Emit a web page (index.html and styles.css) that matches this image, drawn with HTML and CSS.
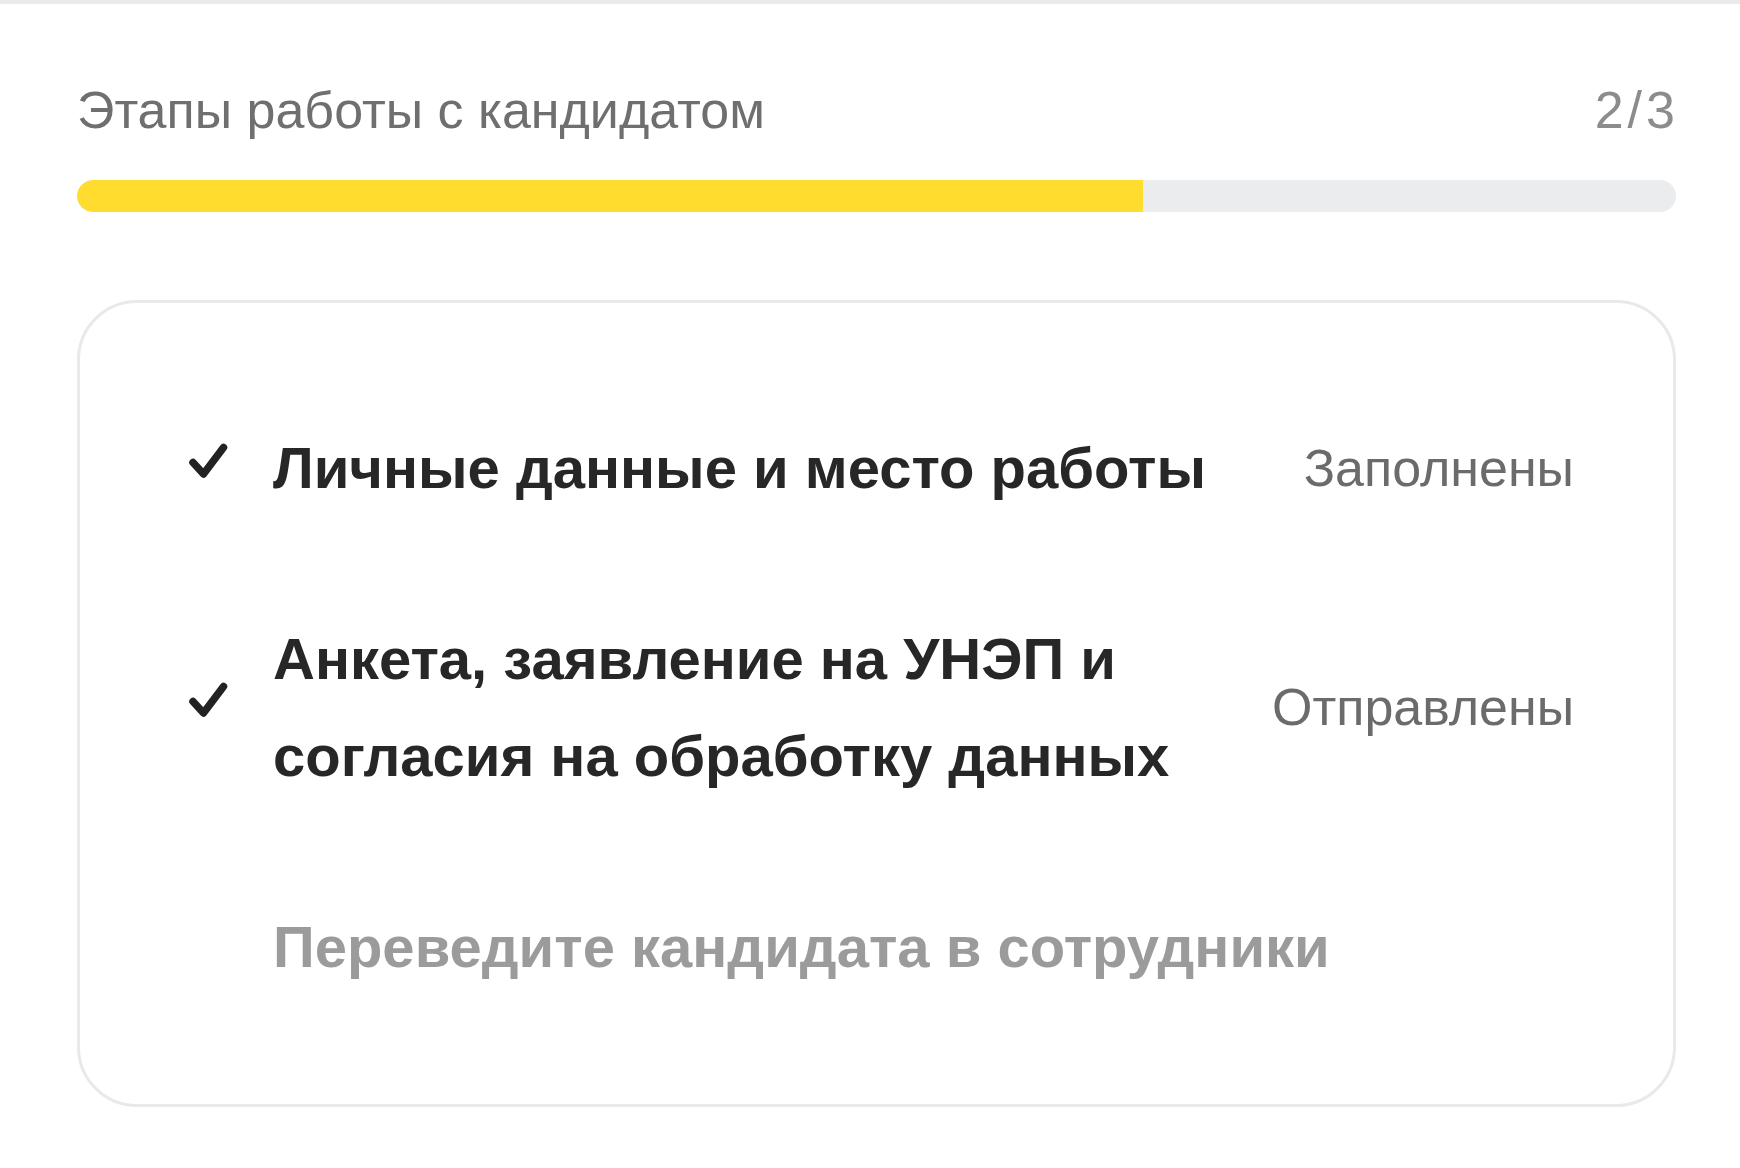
FILE: index.html
```html
<!DOCTYPE html>
<html lang="ru">
<head>
<meta charset="utf-8">
<title>Этапы работы с кандидатом</title>
<link rel="stylesheet" href="styles.css">
</head>
<body>
<div class="topline"></div>
<main class="panel">
  <header class="panel-head">
    <span class="panel-title">Этапы работы с кандидатом</span>
    <span class="panel-count">2/3</span>
  </header>
  <div class="progress"><div class="progress-fill" style="width: 66.667%"></div></div>
  <section class="steps">
    <div class="step">
      <svg class="step-check" viewBox="0 0 40 36" width="40" height="36" aria-hidden="true"><path d="M5 19.5 L15.5 31 L35.5 4.5" fill="none" stroke="#222" stroke-width="7.5" stroke-linecap="round" stroke-linejoin="round"/></svg>
      <div class="step-name">Личные данные и место работы</div>
      <div class="step-status">Заполнены</div>
    </div>
    <div class="step">
      <svg class="step-check" viewBox="0 0 40 36" width="40" height="36" aria-hidden="true"><path d="M5 19.5 L15.5 31 L35.5 4.5" fill="none" stroke="#222" stroke-width="7.5" stroke-linecap="round" stroke-linejoin="round"/></svg>
      <div class="step-name">Анкета, заявление на УНЭП и согласия на обработку данных</div>
      <div class="step-status">Отправлены</div>
    </div>
    <div class="step step-pending">
      <div class="step-name">Переведите кандидата в сотрудники</div>
    </div>
  </section>
</main>
</body>
</html>
```

FILE: styles.css
```css
html, body {
  margin: 0;
  padding: 0;
  background: #ffffff;
}

body {
  font-family: "Liberation Sans", Arial, sans-serif;
  color: #262626;
}

.topline {
  height: 4px;
  background: #e9eaec;
}

.panel {
  padding: 76px 64px 0 77px;
}

.panel-head {
  display: flex;
  justify-content: space-between;
  align-items: baseline;
  font-size: 52px;
  line-height: 60px;
  padding-right: 1px;
}

.panel-title {
  color: #6f6f6f;
}

.panel-count {
  color: #8c8c8c;
  letter-spacing: 4px;
  margin-right: -4px;
}

.progress {
  margin-top: 40px;
  height: 32px;
  border-radius: 16px;
  background: #ebecee;
  overflow: hidden;
}

.progress-fill {
  height: 100%;
  background: #ffdc2e;
  border-radius: 16px 0 0 16px;
}

.steps {
  margin-top: 88px;
  border: 3px solid #e8e9eb;
  border-radius: 60px;
  padding: 116px 99px 109px 108px;
  display: flex;
  flex-direction: column;
  gap: 94px;
}

.step {
  display: grid;
  grid-template-columns: 40px 1fr auto;
  column-gap: 45px;
  align-items: center;
}

.step-check {
  display: block;
  margin-bottom: 14px;
}

.step-name {
  font-size: 58px;
  line-height: 97px;
  font-weight: 700;
  color: #272727;
  max-width: 960px;
}

.step-status {
  font-size: 52px;
  line-height: 60px;
  color: #6b6b6b;
  white-space: nowrap;
}

.step-pending .step-name {
  grid-column: 2 / 4;
  max-width: none;
  color: #9b9b9b;
}
```
